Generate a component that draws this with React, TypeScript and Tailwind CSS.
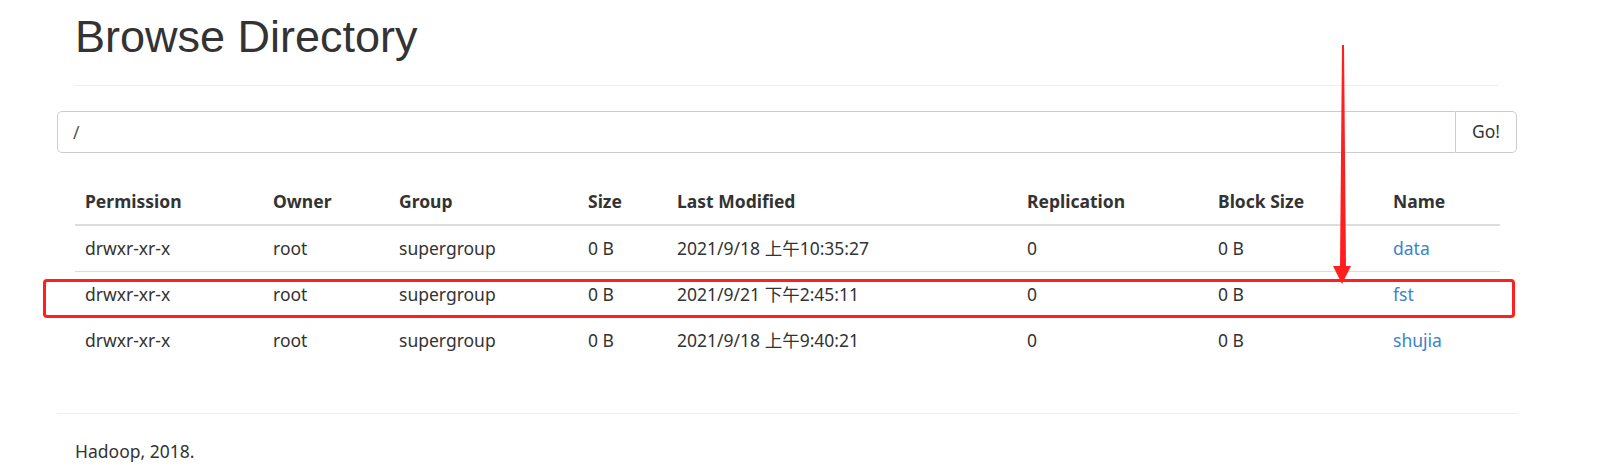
import React from "react";

const rows = [
  { perm: "drwxr-xr-x", owner: "root", group: "supergroup", size: "0 B", modified: "2021/9/18 上午10:35:27", repl: "0", block: "0 B", name: "data" },
  { perm: "drwxr-xr-x", owner: "root", group: "supergroup", size: "0 B", modified: "2021/9/21 下午2:45:11", repl: "0", block: "0 B", name: "fst" },
  { perm: "drwxr-xr-x", owner: "root", group: "supergroup", size: "0 B", modified: "2021/9/18 上午9:40:21", repl: "0", block: "0 B", name: "shujia" },
];

const headers = ["Permission", "Owner", "Group", "Size", "Last Modified", "Replication", "Block Size", "Name"];
const widths = [188, 126, 189, 89, 350, 191, 175, 117];

const App = () => {
  return (
    <div className="relative w-[1620px] h-[469px] overflow-hidden bg-white text-[#333] font-['Noto_Sans','Noto_Sans_CJK_SC',sans-serif] text-[17.5px]">
      <div className="ml-[57px] w-[1460px]">
        <div className="mx-[18px] pt-[12px] pb-[11px] border-b border-[#eee]">
          <h1 className="font-['Liberation_Sans',Arial,sans-serif] text-[45px] leading-[49.5px] font-normal mb-[12px]">
            Browse Directory
          </h1>
        </div>

        <div className="mt-[25px] flex h-[42px]">
          <input
            readOnly
            value="/"
            className="flex-1 h-full border border-[#ccc] rounded-l-[5px] px-[15px] text-[#555] outline-none"
          />
          <button className="w-[61px] h-full border border-l-0 border-[#ccc] rounded-r-[5px] bg-white text-[#333]">
            Go!
          </button>
        </div>

        <div className="mx-[18px] mt-[26px] mb-[50px]">
          <table className="w-full table-fixed border-collapse">
            <colgroup>
              {widths.map((w, i) => (
                <col key={i} style={{ width: w }} />
              ))}
            </colgroup>
            <thead>
              <tr>
                {headers.map((h) => (
                  <th key={h} className="text-left font-bold py-[10px] px-[10px] leading-[25px] border-b-2 border-[#ddd]">
                    {h}
                  </th>
                ))}
              </tr>
            </thead>
            <tbody>
              {rows.map((r) => (
                <tr key={r.name} className="border-t border-[#ddd] first:border-t-0">
                  <td className="py-[10px] px-[10px] leading-[25px]">{r.perm}</td>
                  <td className="py-[10px] px-[10px] leading-[25px]">{r.owner}</td>
                  <td className="py-[10px] px-[10px] leading-[25px]">{r.group}</td>
                  <td className="py-[10px] px-[10px] leading-[25px]">{r.size}</td>
                  <td className="py-[10px] px-[10px] leading-[25px] whitespace-nowrap">{r.modified}</td>
                  <td className="py-[10px] px-[10px] leading-[25px]">{r.repl}</td>
                  <td className="py-[10px] px-[10px] leading-[25px]">{r.block}</td>
                  <td className="py-[10px] px-[10px] leading-[25px]">
                    <a href="#" className="text-[#3a84cc]">{r.name}</a>
                  </td>
                </tr>
              ))}
            </tbody>
          </table>
        </div>

        <hr className="border-0 border-t border-[#eee]" />
        <div className="mx-[18px] mt-[25px] leading-[25px]">Hadoop, 2018.</div>
      </div>

      {/* annotation */}
      <div className="absolute left-[43px] top-[279px] w-[1472px] h-[39px] border-[3px] border-[#ff1f1f] rounded-[4px]" />
      <svg className="absolute left-0 top-0" width="1620" height="469">
        <polygon points="1342,45 1344,45 1346,268 1340,268" fill="#ff1f1f" />
        <polygon points="1333,266 1351,266 1342,284" fill="#ff1f1f" />
      </svg>
    </div>
  );
};

export default App;
